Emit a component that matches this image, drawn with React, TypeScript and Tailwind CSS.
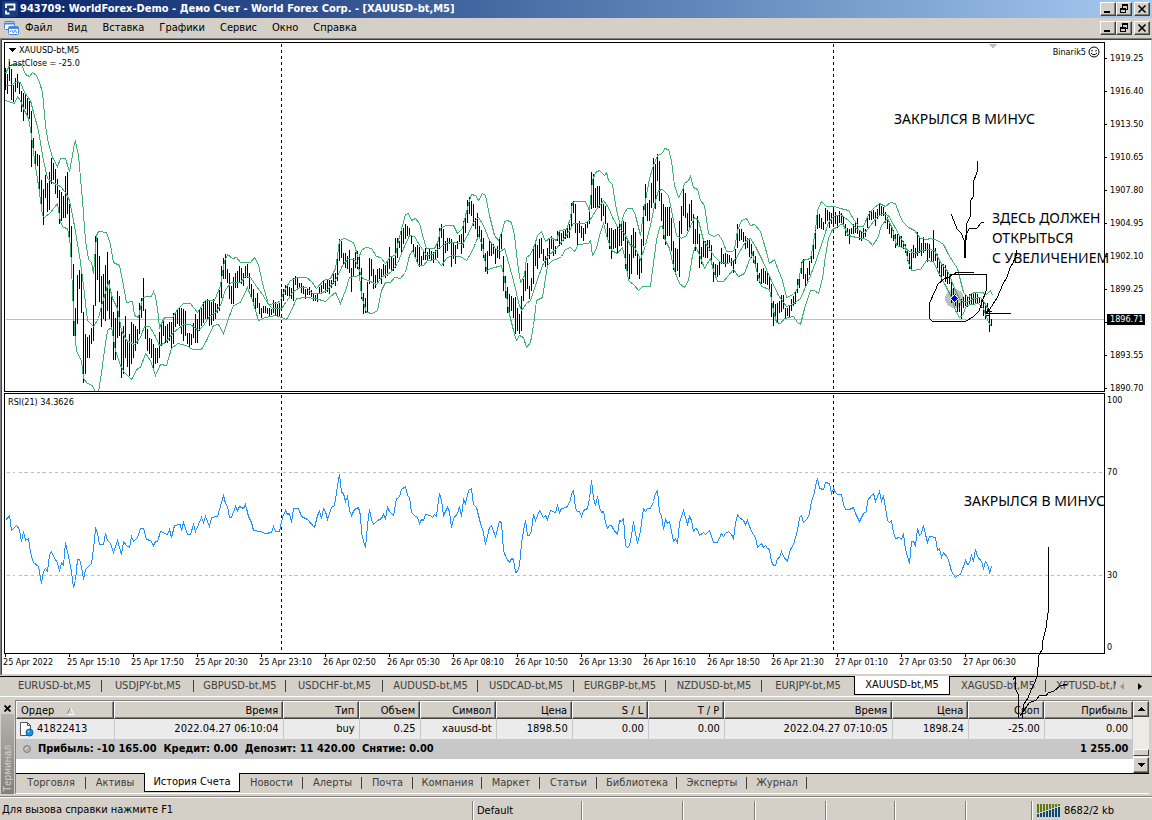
import type { ReactNode } from "react";

/* ================= DATA ================= */

const START_X = 5;
const BAR_STEP = 2;

// high-low pairs, one per bar
const BARS = `67-89 73-93 61-80 68-99 84-101 77-91 73-87 82-93 90-111 92-120 93-108 97-114 100-118 110-166 137-152 150-166 153-165
154-191 179-209 188-224 174-197 182-211 171-209 157-183 162-179 168-193 178-197 189-223 191-220 195-217 175-217 171-213 203-237
225-258 263-335 307-341 274-323 269-288 273-312 311-382 333-373 336-357 334-357 327-343 304-340 235-305 237-279 255-301 275-326
273-318 264-320 251-310 279-318 291-326 311-359 317-359 290-337 295-335 330-377 325-373 315-357 341-366 333-375 321-363 323-357
325-350 328-343 302-333 297-317 277-310 308-338 328-350 337-353 338-357 343-368 347-363 347-362 331-357 323-345 320-335 325-342
323-342 321-340 321-347 312-343 313-326 309-323 306-325 307-333 308-340 310-335 332-343 332-346 333-344 322-337 313-342 318-342
309-330 307-325 301-322 300-318 298-318 300-325 301-324 298-320 302-318 303-312 289-310 265-297 257-278 253-278 268-282 272-298
285-303 276-303 272-287 270-287 265-282 267-283 272-285 265-277 263-277 272-288 283-298 288-305 297-310 292-307 302-313 307-317
305-312 305-312 307-313 307-315 308-314 299-312 301-314 303-315 302-315 288-307 288-300 284-294 285-295 286-296 287-298 277-300
275-284 277-287 282-287 282-292 285-293 288-298 288-294 286-294 289-296 292-300 294-300 292-301 286-293 284-292 279-288 282-292
279-291 279-293 279-287 273-283 272-285 253-280 238-260 240-257 252-263 252-267 255-268 249-272 267-291 257-275 251-267 250-268
254-275 267-298 292-313 297-312 281-311 257-283 258-275 268-288 274-287 268-283 267-278 268-283 263-275 264-277 261-275 246-268
255-270 257-270 237-267 237-257 240-247 229-253 227-243 223-238 225-235 227-235 235-243 243-253 246-257 244-262 246-266 255-264
251-259 247-259 251-260 247-258 250-260 251-262 249-258 242-257 227-248 223-237 228-265 240-252 237-250 237-243 238-266 242-258
244-263 240-248 234-241 233-253 220-247 213-232 199-222 196-213 200-215 203-225 217-228 212-237 225-238 229-250 237-257 252-271
250-273 240-255 242-255 243-253 248-263 245-257 236-258 232-248 255-290 275-297 286-312 293-313 295-310 297-317 296-333 307-330
313-333 295-330 278-300 263-290 262-288 285-298 277-290 248-283 240-265 244-268 238-257 237-253 248-260 255-266 247-265 237-258
235-248 237-255 245-253 230-240 230-245 232-244 230-240 228-238 225-237 223-237 202-225 200-212 203-232 223-246 220-232 225-237
227-240 223-233 220-227 210-223 171-208 173-207 187-207 185-208 185-207 197-220 203-215 205-223 222-237 227-248 227-258 229-248
228-247 225-252 222-245 222-245 220-240 221-268 240-274 253-278 234-273 227-257 231-255 252-274 258-278 238-272 205-245 183-215
202-220 199-220 182-207 157-202 163-208 153-180 160-200 192-220 203-238 206-244 206-235 206-235 217-250 240-269 247-273 248-270
220-276 205-233 187-215 192-217 212-230 203-228 199-220 213-243 228-250 215-243 233-267 246-263 240-256 240-257 239-257 239-250
244-262 261-281 263-276 264-276 260-274 247-263 253-263 252-266 253-263 254-262 257-265 260-272 248-263 223-247 228-240 228-239
231-241 235-248 237-247 237-256 243-257 250-262 255-265 262-280 272-282 268-283 267-282 270-283 270-284 275-288 283-316 300-325
303-317 302-322 300-312 294-311 294-308 307-317 307-315 305-316 298-310 295-305 290-303 278-292 273-287 261-273 258-278 273-285
267-280 260-274 250-262 241-258 227-248 208-228 213-227 217-228 221-229 207-223 209-220 211-227 212-223 205-223 211-223 215-227
210-222 212-222 215-223 223-235 227-235 228-243 227-233 223-233 222-232 217-233 229-239 230-240 227-238 228-236 217-227 210-219
210-219 209-218 211-225 208-218 202-215 205-215 206-215 211-222 216-228 220-233 225-237 229-240 233-247 233-245 235-246 235-247
240-248 243-252 248-260 252-268 248-268 244-257 247-257 231-255 237-252 242-255 236-252 242-250 242-261 243-257 250-260 229-262
247-260 253-267 258-275 262-280 263-275 264-281 269-283 273-283 280-302 287-297 293-305 297-311 302-311 298-318 296-307 293-305
295-306 293-303 292-303 293-303 291-303 293-302 297-302 297-307 300-315 305-318 302-313 308-331 318-325`;

const barsPath = BARS.split(/\s+/)
  .map((pair, i) => {
    const [high, low] = pair.split("-");
    return `M${START_X + i * BAR_STEP} ${high}V${low}`;
  })
  .join("");

const UPPER =
  "5,73 9,65 12,64 21,64 25,74 29,76 32,72 36,75 39,82 42,92 45,125 48,143 52,157 57,166 60,158 65,158 69,171 72,155 74,143 75,141 78,155 82,200 85,240 88,259 91,262 93,273 96,235 98,231 106,232 108,238 110,244 113,262 119,265 122,280 126,302 132,301 134,315 138,317 142,298 145,296 151,296 153,291 155,296 157,308 159,327 164,317 172,317 177,309 183,303 190,303 197,312 205,300 214,300 220,285 224,261 227,254 232,258 236,257 240,262 250,262 254,257 258,264 262,283 268,304 276,303 280,300 284,290 290,280 297,277 306,277 311,281 316,288 323,280 330,278 335,268 337,255 339,240 344,238 353,242 358,258 361,250 365,247 371,248 376,256 380,257 385,263 390,256 395,255 398,240 402,225 405,214 408,213 411,220 415,218 419,223 423,238 426,248 434,248 438,240 440,228 445,225 453,225 457,233 462,228 465,215 469,200 471,194 475,195 478,200 482,193 485,195 489,215 494,235 498,240 502,230 504,221 507,220 511,222 514,235 517,262 520,282 524,275 526,257 530,254 534,245 537,235 541,231 545,241 550,237 556,240 559,230 566,229 570,218 572,202 575,201 585,201 589,210 592,180 595,172 599,170 604,175 606,172 608,180 612,184 615,204 618,218 620,225 624,212 627,208 632,208 635,215 640,235 642,220 645,200 649,178 653,165 657,155 662,153 664,148 668,149 671,160 674,185 678,197 682,190 684,183 688,180 690,176 693,187 697,189 700,200 704,205 708,233 713,236 718,234 722,240 726,251 732,251 734,249 737,230 741,220 746,218 750,225 754,224 760,231 765,248 769,263 774,259 778,270 782,280 786,297 793,294 797,288 800,270 802,260 810,258 812,248 815,230 817,210 821,201 826,206 834,206 840,208 848,210 854,220 858,226 863,226 868,214 873,208 879,203 885,206 890,202 895,203 900,217 903,222 908,227 914,230 920,238 926,239 930,238 937,240 943,244 948,254 953,262 957,268 960,280 963,292 968,297 971,293 975,292 982,292 986,294 990,290 992,295";

const MIDDLE =
  "5,85 10,85 16,81 20,82 24,92 30,100 33,112 38,130 43,160 47,178 52,182 60,186 65,192 69,200 73,220 79,255 83,285 87,320 93,326 98,318 102,302 108,282 112,298 117,308 121,330 126,340 134,344 140,337 144,326 149,326 154,334 159,345 165,342 173,332 183,324 190,324 198,330 203,325 209,316 215,312 220,305 225,289 231,282 240,282 245,276 250,277 256,286 262,294 268,304 272,308 281,308 286,301 292,292 299,287 306,287 312,293 320,293 326,290 335,280 342,265 348,258 355,260 362,278 368,280 376,284 382,276 390,272 397,263 403,248 409,235 414,236 420,246 426,255 432,254 438,248 447,242 455,242 462,244 468,233 473,222 478,217 483,225 489,240 495,248 500,251 504,248 508,262 514,284 518,302 521,310 526,303 530,300 536,282 542,265 548,255 556,248 562,240 568,232 573,223 584,223 590,219 596,209 603,200 608,207 612,217 617,226 624,233 630,245 634,246 640,259 645,245 650,225 655,200 658,190 662,189 668,195 672,215 676,235 681,238 686,235 690,226 694,217 698,220 703,240 708,247 714,256 720,262 728,263 735,259 740,250 746,240 750,238 755,246 762,260 770,278 778,295 786,306 792,304 800,298 808,280 815,262 823,238 828,222 833,216 840,214 848,220 856,228 864,233 870,225 876,217 882,213 888,215 894,226 900,237 907,250 915,253 921,250 928,249 934,250 940,262 948,272 954,288 960,300 966,302 973,298 980,297 984,302 988,310 991,312";

const LOWER =
  "5,100 8,101 14,103 17,96 20,100 23,108 28,118 31,135 34,160 38,185 42,215 44,217 50,212 57,203 60,222 63,227 67,228 70,245 72,290 74,330 76,350 79,357 81,360 83,378 87,383 92,385 95,392 98,392 101,372 104,350 107,330 111,327 115,350 120,365 124,372 131,379 137,368 140,367 145,353 150,360 155,375 160,364 166,365 171,348 177,343 186,345 192,349 201,349 206,340 213,325 218,324 223,333 228,318 233,305 240,302 247,287 252,300 258,320 265,317 275,315 281,317 286,319 291,310 296,298 306,297 315,298 325,301 330,296 335,292 340,303 345,290 349,277 354,276 359,275 361,295 366,312 372,313 377,310 381,290 385,282 390,282 394,277 400,278 405,272 409,255 412,250 418,265 423,265 427,260 436,259 441,265 446,258 451,255 460,256 466,260 471,252 475,243 478,235 482,245 486,270 491,268 501,265 504,278 508,310 513,330 516,340 519,335 523,337 526,347 530,342 533,325 536,300 542,297 547,265 552,260 558,258 561,256 565,249 570,247 574,251 578,244 588,243 590,240 592,255 596,248 600,232 603,223 607,238 611,250 617,253 622,247 625,260 628,280 634,285 638,290 642,286 650,286 652,270 656,240 659,227 662,225 664,238 669,248 674,270 679,283 684,287 688,280 692,255 695,245 700,257 704,268 710,258 713,270 717,281 723,281 728,275 733,269 738,276 744,273 748,262 752,253 756,270 761,286 769,289 773,310 776,322 780,323 784,318 793,316 797,322 800,324 804,308 810,290 814,290 818,293 822,278 825,255 828,238 832,229 836,227 842,223 848,235 856,237 863,238 868,240 872,245 877,238 881,225 887,218 892,228 896,245 905,248 908,262 911,270 920,269 926,260 933,261 938,272 945,285 951,297 955,310 959,317 962,315 966,305 972,304 978,303 983,308 988,322 991,326";

const RSI =
  "5,520 9,515 11,530 16,525 19,529 21,541 23,531 25,540 28,538 30,552 33,562 38,566 41,583 43,571 45,568 47,571 49,554 51,551 54,558 57,562 59,571 61,562 63,565 65,542 68,556 71,571 73,587 75,580 77,559 79,559 81,566 83,579 85,569 88,566 91,563 94,540 95,527 97,533 99,544 103,544 105,533 107,540 110,543 113,552 117,540 121,554 123,541 126,545 129,547 131,536 133,541 137,537 140,528 143,528 146,539 150,540 153,545 155,541 157,541 160,531 167,534 169,529 171,537 174,525 180,524 181,530 183,522 187,534 190,534 193,524 195,531 201,517 203,522 205,516 209,526 211,517 217,516 219,509 223,495 225,503 227,506 229,517 231,517 235,506 237,510 239,506 243,508 245,504 248,516 251,522 253,530 260,531 265,533 271,532 273,526 275,531 279,531 282,517 285,510 287,514 289,513 291,522 293,508 298,508 301,516 307,519 314,527 317,515 319,511 321,518 323,508 325,511 327,519 331,507 334,505 336,492 339,474 341,492 343,493 345,501 347,496 349,510 351,515 354,509 358,507 360,515 361,532 363,541 365,547 367,525 369,509 371,519 373,524 377,520 381,518 383,514 385,518 387,507 389,511 393,515 396,498 399,497 401,489 405,486 407,495 409,497 411,512 414,515 417,517 419,523 421,519 423,520 425,514 430,515 432,517 434,514 436,516 437,507 439,493 441,500 443,515 447,507 449,511 451,527 453,518 457,513 459,506 461,516 463,499 465,503 468,490 471,488 473,504 476,507 480,523 483,532 485,544 489,527 491,525 495,536 499,521 501,522 503,550 506,558 509,562 511,558 513,559 515,572 517,571 519,565 521,543 523,530 525,520 527,535 529,535 531,530 533,514 535,520 539,510 543,517 545,515 547,519 550,510 555,512 557,505 559,512 561,508 566,507 570,500 571,493 573,490 575,508 577,511 579,511 581,516 583,510 587,508 589,498 591,480 593,498 595,505 597,496 599,507 601,512 603,511 605,522 607,528 609,525 611,525 613,529 617,534 619,520 621,521 623,518 625,545 627,547 629,545 631,535 633,521 635,533 637,543 640,530 643,508 645,511 647,508 650,508 653,501 655,493 657,490 659,512 661,515 663,529 665,519 667,523 669,521 673,541 675,538 677,543 679,522 683,510 687,524 689,516 691,520 693,531 695,528 697,529 699,535 703,532 705,534 709,530 713,542 717,542 721,533 723,536 725,533 728,531 731,534 733,538 735,523 737,514 739,517 743,520 745,524 747,520 751,531 755,537 757,547 759,545 761,543 763,547 765,545 767,548 769,549 771,561 773,565 775,565 777,558 779,557 781,551 783,556 787,561 790,549 793,544 797,530 799,517 801,515 803,522 807,518 809,513 811,501 814,492 815,485 817,478 819,488 823,489 825,482 829,483 831,493 833,488 835,492 837,494 841,494 843,504 845,509 849,509 853,507 855,513 859,521 863,513 866,511 867,500 871,495 873,493 875,501 879,491 881,501 883,495 885,507 887,520 889,522 891,520 893,532 895,538 899,537 901,539 903,533 905,549 909,563 911,541 913,541 915,545 917,528 919,535 921,533 923,525 925,534 927,542 929,536 935,537 937,550 939,548 941,557 943,552 947,557 949,563 951,571 955,577 957,575 960,574 965,560 967,564 969,563 971,555 973,561 975,549 977,556 981,561 983,568 985,561 988,566 989,573 991,566";

const menu = ["Файл", "Вид", "Вставка", "Графики", "Сервис", "Окно", "Справка"];

// the empty step is covered by the current price mark
const prices = ["1919.25", "1916.40", "1913.50", "1910.65", "1907.80", "1904.95", "1902.10", "1899.25", "", "1893.55", "1890.70"];

const times = [
  "25 Apr 2022", "25 Apr 15:10", "25 Apr 17:50", "25 Apr 20:30", "25 Apr 23:10", "26 Apr 02:50", "26 Apr 05:30", "26 Apr 08:10",
  "26 Apr 10:50", "26 Apr 13:30", "26 Apr 16:10", "26 Apr 18:50", "26 Apr 21:30", "27 Apr 01:10", "27 Apr 03:50", "27 Apr 06:30",
];

interface Tab {
  label: string;
  width: string;
  active?: boolean;
  last?: boolean;
}

const chartTabs: Tab[] = [
  { label: "EURUSD-bt,M5", width: "w-[95px]" },
  { label: "USDJPY-bt,M5", width: "w-[92px]" },
  { label: "GBPUSD-bt,M5", width: "w-[92px]" },
  { label: "USDCHF-bt,M5", width: "w-[97px]" },
  { label: "AUDUSD-bt,M5", width: "w-[95px]" },
  { label: "USDCAD-bt,M5", width: "w-[96px]" },
  { label: "EURGBP-bt,M5", width: "w-[92px]" },
  { label: "NZDUSD-bt,M5", width: "w-[96px]" },
  { label: "EURJPY-bt,M5", width: "w-[92px]", last: true },
  { label: "XAUUSD-bt,M5", width: "w-[96px]", active: true },
  { label: "XAGUSD-bt,M5", width: "w-[96px]" },
];

const terminalTabs: Tab[] = [
  { label: "Торговля", width: "w-[70px]" },
  { label: "Активы", width: "w-[58px]", last: true },
  { label: "История Счета", width: "w-[96px]", active: true },
  { label: "Новости", width: "w-[63px]" },
  { label: "Алерты", width: "w-[59px]" },
  { label: "Почта", width: "w-[51px]" },
  { label: "Компания", width: "w-[69px]" },
  { label: "Маркет", width: "w-[58px]" },
  { label: "Статьи", width: "w-[57px]" },
  { label: "Библиотека", width: "w-[80px]" },
  { label: "Эксперты", width: "w-[70px]" },
  { label: "Журнал", width: "w-[60px]" },
];

const columns = [
  { label: "Ордер", width: "w-[98px]", value: "41822413" },
  { label: "Время", width: "w-[169px]", value: "2022.04.27 06:10:04" },
  { label: "Тип", width: "w-[76px]", value: "buy" },
  { label: "Объем", width: "w-[61px]", value: "0.25" },
  { label: "Символ", width: "w-[76px]", value: "xauusd-bt" },
  { label: "Цена", width: "w-[76px]", value: "1898.50" },
  { label: "S / L", width: "w-[76px]", value: "0.00" },
  { label: "T / P", width: "w-[76px]", value: "0.00" },
  { label: "Время", width: "w-[168px]", value: "2022.04.27 07:10:05" },
  { label: "Цена", width: "w-[76px]", value: "1898.24" },
  { label: "Своп", width: "w-[76px]", value: "-25.00" },
  { label: "Прибыль", width: "w-[88px]", value: "0.00" },
];

const statusCells = ["w-[109px]", "w-[101px]", "w-[72px]", "w-[71px]", "w-[69px]", "w-[71px]", "w-[66px]"];

/* ================= SMALL PARTS ================= */

const bevel = "border border-t-white border-l-white border-r-[#404040] border-b-[#404040] bg-[#d4d0c8]";

function BevelButton({ label, className, children }: { label: string; className: string; children: ReactNode }) {
  return (
    <button
      aria-label={label}
      className={`${bevel} flex shrink-0 items-center justify-center shadow-[inset_-1px_-1px_0_#808080] ${className}`}
    >
      {children}
    </button>
  );
}

function WindowButtons() {
  return (
    <div className="ml-auto flex items-center pr-[2px]">
      <BevelButton label="Свернуть" className="h-[14px] w-4">
        <svg width="10" height="10" shapeRendering="crispEdges">
          <path d="M1 7h6v2h-6z" />
        </svg>
      </BevelButton>
      <BevelButton label="Восстановить" className="h-[14px] w-4">
        <svg width="10" height="10" shapeRendering="crispEdges" fill="none" stroke="#000">
          <path d="M3.5 4V.5h5v5H7M3 1.5h6M1.5 4.5h5v4h-5zM1 5.5h6" />
        </svg>
      </BevelButton>
      <BevelButton label="Закрыть" className="ml-[2px] h-[14px] w-4">
        <svg width="10" height="10" stroke="#000" strokeWidth="1.6">
          <path d="M1.5 1.5l7 7M8.500 1.500l-7 7" />
        </svg>
      </BevelButton>
    </div>
  );
}

function TabItem({ tab }: { tab: Tab }) {
  if (tab.active) {
    return (
      <button className={`${tab.width} -mt-px h-[19px] shrink-0 border-x border-b border-black bg-white pb-px text-center text-black`}>
        {tab.label}
      </button>
    );
  }
  return (
    <button className={`${tab.width} relative h-[17px] shrink-0 text-center text-[#404040]`}>
      {tab.label}
      {!tab.last && <span className="absolute top-[3px] right-0 h-3 w-px bg-[#404040]" />}
    </button>
  );
}

/* ================= CHART ================= */

function PriceChart() {
  return (
    <svg viewBox="5 43 1099 348" preserveAspectRatio="none" className="block h-full w-full" shapeRendering="crispEdges" fill="none">
      <g transform="translate(.5 .5)">
        <path d="M5 319H1104" stroke="#c0c0c0" />
        <path d="M281 43V391M833 43V391" stroke="#000" strokeDasharray="3 3" />
        <path d="M987 43h10l-5 5z" fill="#c0c0c0" />
        <circle cx="954" cy="298" r="9.500" fill="#c0c0c0" />
        <path d={barsPath} stroke="#000" />
        <g stroke="#3cb371">
          <polyline points={UPPER} />
          <polyline points={MIDDLE} />
          <polyline points={LOWER} />
        </g>
        <path d="M954 294l4 4-4 4-4-4z" fill="#00f" stroke="#fff" />
      </g>
    </svg>
  );
}

function RsiChart() {
  return (
    <svg viewBox="5 394 1099 259" preserveAspectRatio="none" className="block h-full w-full" shapeRendering="crispEdges" fill="none">
      <g transform="translate(.5 .5)">
        <path d="M6 472H1104M6 575H1104" stroke="#c0c0c0" strokeDasharray="3 3" />
        <path d="M281 394V653M833 394V653" stroke="#000" strokeDasharray="3 3" />
        <polyline points={RSI} stroke="#1e90ff" />
      </g>
    </svg>
  );
}

function ChartWindow() {
  return (
    <div className="border-t border-l border-[#808080]">
      <div className="flex flex-col border-t border-r border-b border-l border-t-[#404040] border-r-[#d4d0c8] border-b-[#d4d0c8] border-l-[#404040] bg-white pt-[2px] pl-[2px] text-[9px] leading-[11px]">
        <div className="flex">
          <div className="relative h-[350px] flex-1 border border-black">
            <PriceChart />
            <div className="absolute top-[2px] left-[3px]">
              <div className="flex items-center gap-[3px]">
                <svg width="8" height="5" shapeRendering="crispEdges">
                  <path d="M0 0h8L4 4z" />
                </svg>
                XAUUSD-bt,M5
              </div>
              <div className="mt-[2px]">LastClose = -25.0</div>
            </div>
            <div className="absolute top-[3px] right-1 flex items-center gap-[2px]">
              Binarik5
              <svg width="12" height="12" fill="none" stroke="#000">
                <circle cx="6" cy="6" r="5" />
                <path d="M3 7q3 3.500 6 0M4 4v1.500M8 4v1.500" />
              </svg>
            </div>
          </div>
          <ul className="relative h-[350px] w-[46px]">
            {prices.map((price, i) => (
              <li key={i} className="flex h-[33px] items-center gap-[3px]">
                <span className="h-px w-[2px] bg-black" />
                {price}
              </li>
            ))}
            <li className="absolute top-[272px] right-[6px] left-[2px] bg-black pl-[3px] text-white">1896.71</li>
          </ul>
        </div>

        <div className="mt-px flex">
          <div className="relative h-[261px] flex-1 border border-black">
            <RsiChart />
            <span className="absolute top-[3px] left-[3px]">RSI(21) 34.3626</span>
          </div>
          <ul className="h-[261px] w-[46px] pt-[2px] pl-[2px]">
            <li className="h-[72px]">100</li>
            <li className="h-[103px]">70</li>
            <li className="h-[72px]">30</li>
            <li>0</li>
          </ul>
        </div>

        <div className="-ml-px flex h-5 overflow-hidden">
          {times.map((time) => (
            <span key={time} className="w-16 shrink-0 whitespace-nowrap">
              <span className="ml-[2px] block h-[3px] w-px bg-black" />
              {time}
            </span>
          ))}
        </div>
      </div>
    </div>
  );
}

/* ================= TERMINAL ================= */

function OrderIcon() {
  return (
    <svg width="16" height="16" viewBox="0 0 16 16" className="shrink-0">
      <path d="M2.500 1.500h7l3 3v10h-10z" fill="#fff" stroke="#555" />
      <path d="M9.500 1.500v3h3" fill="none" stroke="#555" />
      <circle cx="11.500" cy="11.500" r="3.500" fill="#1d8fe0" stroke="#0a5fa8" />
      <circle cx="10.500" cy="10.500" r="1" fill="#9fd8ff" />
    </svg>
  );
}

function HistoryTable() {
  return (
    <table className="w-full table-fixed border-collapse">
      <thead>
        <tr className="h-[18px]">
          {columns.map((col, i) => (
            <th key={i} className={`${col.width} p-0 font-normal`}>
              <div
                className={`${bevel} h-[18px] pt-px leading-[15px] shadow-[inset_-1px_-1px_0_#808080] ${
                  i === 0 ? "flex items-center gap-3 pl-1" : "pr-1 text-right"
                }`}
              >
                {col.label}
                {i === 0 && (
                  <svg width="9" height="8" fill="none" stroke="#fff">
                    <path d="M1 7L4.500 1" stroke="#808080" />
                    <path d="M4.500 1L8 7.500H.5" />
                  </svg>
                )}
              </div>
            </th>
          ))}
        </tr>
      </thead>
      <tbody>
        <tr className="h-5 bg-[#ebebeb]">
          {columns.map((col, i) => (
            <td key={i} className="border-r border-[#c8c8c8] p-0 pr-1 text-right">
              {i === 0 ? (
                <span className="flex items-center gap-[3px] pl-[2px]">
                  <OrderIcon />
                  {col.value}
                </span>
              ) : (
                col.value
              )}
            </td>
          ))}
        </tr>
        <tr className="h-5 bg-[#c8c8c8] font-bold">
          <td colSpan={11} className="p-0">
            <span className="flex items-center gap-[7px] pl-[7px] whitespace-pre">
              <svg width="8" height="8">
                <circle cx="4" cy="4" r="3.500" fill="#b0b0b0" stroke="#808080" />
                <path d="M2 5l3-3" stroke="#eee" />
              </svg>
              {"Прибыль: -10 165.00  Кредит: 0.00  Депозит: 11 420.00  Снятие: 0.00"}
            </span>
          </td>
          <td className="p-0 pr-1 text-right">1 255.00</td>
        </tr>
      </tbody>
    </table>
  );
}

function Terminal() {
  return (
    <section className="flex pt-[3px] pb-[2px]">
      <div className="flex w-[15px] flex-col items-center pt-[2px]">
        <button aria-label="Закрыть" className="flex h-3 items-center">
          <svg width="7" height="7" stroke="#000" strokeWidth="1.800">
            <path d="M.5.500l6 6M6.500.500l-6 6" />
          </svg>
        </button>
        <div className="flex w-[13px] flex-1 items-center bg-linear-to-b from-[#b4b2ac] to-[#808080] text-[10px] leading-[13px] text-[#d4d0c8] [writing-mode:vertical-rl]">
          <span className="mt-auto rotate-180 pt-[2px]">Терминал</span>
        </div>
      </div>

      <div className="mr-[3px] flex min-w-0 flex-1 flex-col border-t border-l border-[#808080] border-b border-b-white">
        <div className="flex h-[72px] bg-white">
          <div className="min-w-0 flex-1">
            <HistoryTable />
          </div>
          <div className="flex w-4 flex-col bg-[#eceae6]">
            <BevelButton label="Вверх" className="h-4 w-4">
              <svg width="7" height="4" shapeRendering="crispEdges">
                <path d="M3 0h1l3 4H0z" />
              </svg>
            </BevelButton>
            <div className="flex-1" />
            <div className={`${bevel} h-[7px]`} />
            <BevelButton label="Вниз" className="mt-px h-4 w-4">
              <svg width="7" height="4" shapeRendering="crispEdges">
                <path d="M0 0h7L4 4H3z" />
              </svg>
            </BevelButton>
          </div>
        </div>
        <nav className="flex h-5 border-t border-black">
          {terminalTabs.map((tab) => (
            <TabItem key={tab.label} tab={tab} />
          ))}
        </nav>
      </div>
    </section>
  );
}

/* ================= STATUS BAR ================= */

function StatusBar() {
  return (
    <footer className="flex h-6 border-t border-[#808080] shadow-[inset_0_1px_0_#fff]">
      <span className="flex min-w-0 flex-1 items-center pt-[3px] pl-[2px] whitespace-nowrap">Для вызова справки нажмите F1</span>
      {statusCells.map((width, i) => (
        <span
          key={i}
          className={`${width} mt-1 flex shrink-0 items-center border-l border-[#808080] pl-1 shadow-[inset_1px_0_0_#fff]`}
        >
          {i === 0 && "Default"}
        </span>
      ))}
      <span className="mt-1 flex w-[121px] shrink-0 items-center gap-1 border-l border-[#808080] pl-[5px] shadow-[inset_1px_0_0_#fff]">
        <svg width="23" height="13" shapeRendering="crispEdges">
          {[0, 1, 2, 3, 4, 5, 6, 7].map((i) => (
            <g key={i}>
              <rect x={i * 3} y="0" width="2" height={9 - i} fill="#5c7a12" />
              <rect x={i * 3} y={10 - i} width="2" height={3 + i} fill="#0c4a70" />
            </g>
          ))}
        </svg>
        8682/2 kb
      </span>
    </footer>
  );
}

/* ================= PEN NOTES ================= */

function Notes() {
  return (
    <div className="pointer-events-none absolute inset-0 font-['Noto_Sans',sans-serif] text-[14px] leading-[20px] text-black">
      <svg viewBox="0 0 1152 820" preserveAspectRatio="none" className="absolute inset-0 h-full w-full" shapeRendering="crispEdges" fill="none" stroke="#000">
        <path d="M977 161v11l-4 11v14l-2 3-1 17-3 6-1 17-1 18M951 214l3 7 3 8 4 4 3 7v10l1 8M984 222l-3 1-4 5-8 1-3 6-1 12" />
        <path d="M974 272h-17l-8 5-5 2-6 5-3 7-5 11-1 8v8l3 3h34l7-4 6-6 3-9 4-11 1-16-17-1h-20" />
        <path d="M1016 250l1 3-4 10-3 5-3 9-4 7-6 14-9 14M1011 313h-25l3-5M985 311h7M986 315h4" />
        <path d="M1048 547v66l-2 15-3 12-1 10-3 5-1 12-1 10-3 7-3 6-3 8-4 6-2 14M1015 677l-2 3M1015 677l1 13 2 4 1 24M1067 684l-7 2-6 5-6 2-2 3-6-1-4 5-7 3-4 6-5 7" />
      </svg>
      <p className="absolute top-[109px] left-[894px]">ЗАКРЫЛСЯ В МИНУС</p>
      <p className="absolute top-[208px] left-[992px] whitespace-nowrap">
        ЗДЕСЬ ДОЛЖЕН
        <br />
        ОТКРЫТЬСЯ
        <br />С УВЕЛИЧЕНИЕМ
      </p>
      <p className="absolute top-[491px] left-[964px] whitespace-nowrap">ЗАКРЫЛСЯ В МИНУС</p>
    </div>
  );
}

export default function App() {
  return (
    <main className="relative flex min-h-screen flex-col overflow-hidden bg-[#d4d0c8] font-['DejaVu_Sans_Condensed','DejaVu_Sans',sans-serif] text-[11px] leading-[14px] text-black">
      {/* title bar */}
      <header className="flex h-[18px] items-center bg-linear-to-r from-[#0a246a] to-[#a6caf0] pl-[2px]">
        <svg width="16" height="16" viewBox="0 0 16 16" className="mr-[2px]">
          <rect width="16" height="16" rx="2" fill="#153f80" />
          <path d="M4 7V3.500h8.500v5H8M4 9.500v3h3.500M7 8.500h3" fill="none" stroke="#fff" strokeWidth="1.800" />
        </svg>
        <h1 className="text-[11px] font-bold whitespace-nowrap text-white">
          943709: WorldForex-Demo - Демо Счет - World Forex Corp. - [XAUUSD-bt,M5]
        </h1>
        <WindowButtons />
      </header>

      {/* menu */}
      <nav className="flex h-5 items-center pl-1">
        <svg width="16" height="16" viewBox="0 0 16 16" className="mr-[5px]" fill="#fff" stroke="#4a86d8">
          <rect x=".5" y="1.500" width="10" height="8" rx="1" />
          <path d="M1 3.500h9" strokeWidth="2" />
          <rect x="4.500" y="6.500" width="10" height="8" rx="1" />
          <path d="M5 8h9" strokeWidth="2" />
          <path d="M6 12l1.500-2 2 3 1.500-3 2 3" fill="none" />
        </svg>
        <div className="flex gap-[15px]">
          {menu.map((item) => (
            <button key={item}>{item}</button>
          ))}
        </div>
        <WindowButtons />
      </nav>

      <ChartWindow />

      {/* chart tabs */}
      <nav className="mt-px flex h-[21px] border-t border-b border-t-black border-b-white pl-[7px]">
        {chartTabs.map((tab) => (
          <TabItem key={tab.label} tab={tab} />
        ))}
        <button className="h-[17px] min-w-0 flex-1 overflow-hidden pl-[10px] text-left whitespace-nowrap text-[#404040]">XPTUSD-bt,M5</button>
        <div className="flex w-9 shrink-0 items-center justify-between pr-[10px] pl-1">
          <button aria-label="Назад">
            <svg width="4" height="7" fill="#999">
              <path d="M4 0v7L0 3.500z" />
            </svg>
          </button>
          <button aria-label="Вперед">
            <svg width="4" height="7">
              <path d="M0 0v7l4-3.500z" />
            </svg>
          </button>
        </div>
      </nav>

      <Terminal />
      <StatusBar />
      <Notes />
    </main>
  );
}
